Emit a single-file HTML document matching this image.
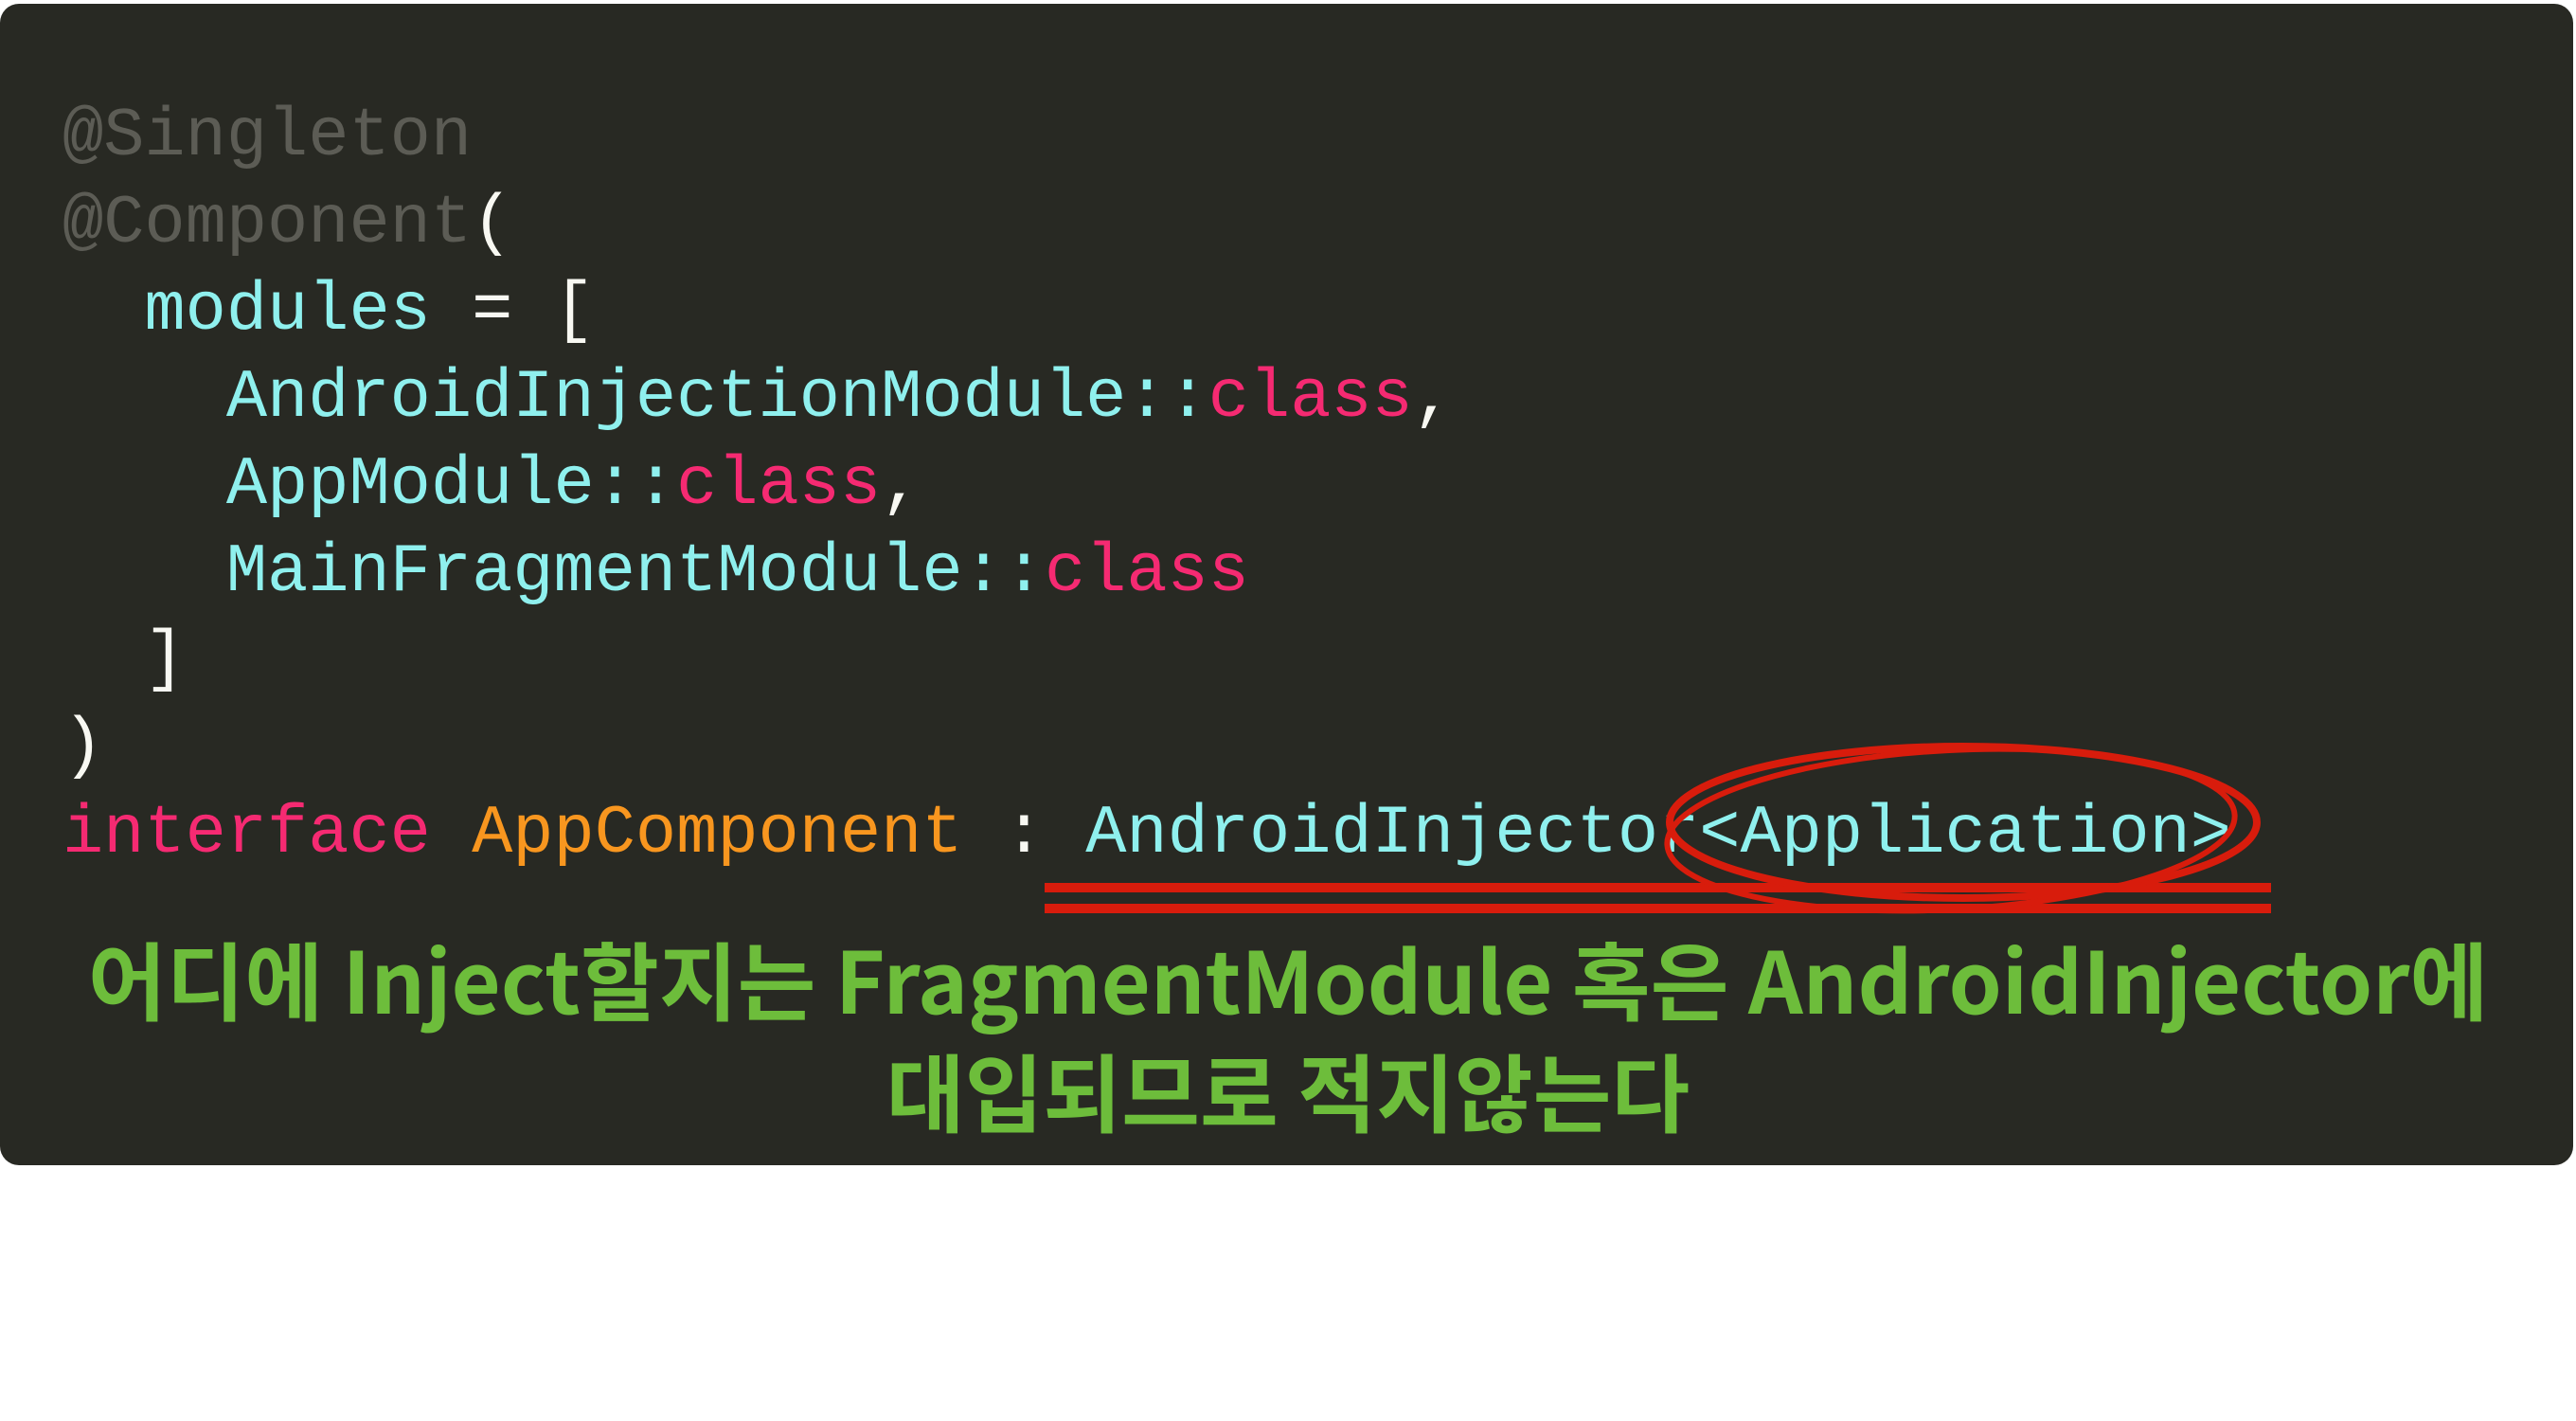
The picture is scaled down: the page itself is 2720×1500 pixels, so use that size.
<!DOCTYPE html>
<html><head><meta charset="utf-8"><style>
html,body{margin:0;padding:0;width:2720px;height:1500px;background:#fff;overflow:hidden}
.box{position:absolute;left:0;top:4px;width:2717px;height:1226px;background:#282923;border-radius:20px}
.code{position:absolute;left:66px;top:0;font-family:"Liberation Mono",monospace;font-size:72px;color:#f8f8f2;white-space:pre}
.l{position:absolute;left:0;height:92px;line-height:92px}
.g{color:#5c5c55}.c{color:#8ff0ee}.p{color:#f52a72}.o{color:#f8961f}
.t{position:absolute;left:0;width:2720px;text-align:center;font-family:"Noto Sans CJK KR",sans-serif;font-weight:700;font-size:90px;color:#6dbd3b;letter-spacing:0px;white-space:nowrap}
</style></head><body>
<div class="box"></div>
<div class="code">
<div class="l" style="top:98px"><span class="g">@Singleton</span></div>
<div class="l" style="top:190px"><span class="g">@Component</span>(</div>
<div class="l" style="top:282px">  <span class="c">modules</span> = [</div>
<div class="l" style="top:374px">    <span class="c">AndroidInjectionModule::</span><span class="p">class</span>,</div>
<div class="l" style="top:466px">    <span class="c">AppModule::</span><span class="p">class</span>,</div>
<div class="l" style="top:558px">    <span class="c">MainFragmentModule::</span><span class="p">class</span></div>
<div class="l" style="top:650px">  ]</div>
<div class="l" style="top:742px">)</div>
<div class="l" style="top:834px"><span class="p">interface</span> <span class="o">AppComponent</span> : <span class="c">AndroidInjector&lt;Application&gt;</span></div>
</div>
<svg style="position:absolute;left:0;top:0" width="2720" height="1500">
<line x1="1103" y1="937" x2="2398" y2="937" stroke="#d81c0c" stroke-width="10"/>
<line x1="1103" y1="959" x2="2398" y2="959" stroke="#d81c0c" stroke-width="10"/>
<ellipse cx="2073" cy="868" rx="310" ry="80" fill="none" stroke="#d81c0c" stroke-width="8"/>
<ellipse cx="2060" cy="876" rx="300" ry="84" fill="none" stroke="#d81c0c" stroke-width="6" transform="rotate(-3 2060 876)"/>
</svg>
<div class="t" style="top:966px">어디에 Inject할지는 FragmentModule 혹은 AndroidInjector에</div>
<div class="t" style="top:1084px">대입되므로 적지않는다</div>
</body></html>
